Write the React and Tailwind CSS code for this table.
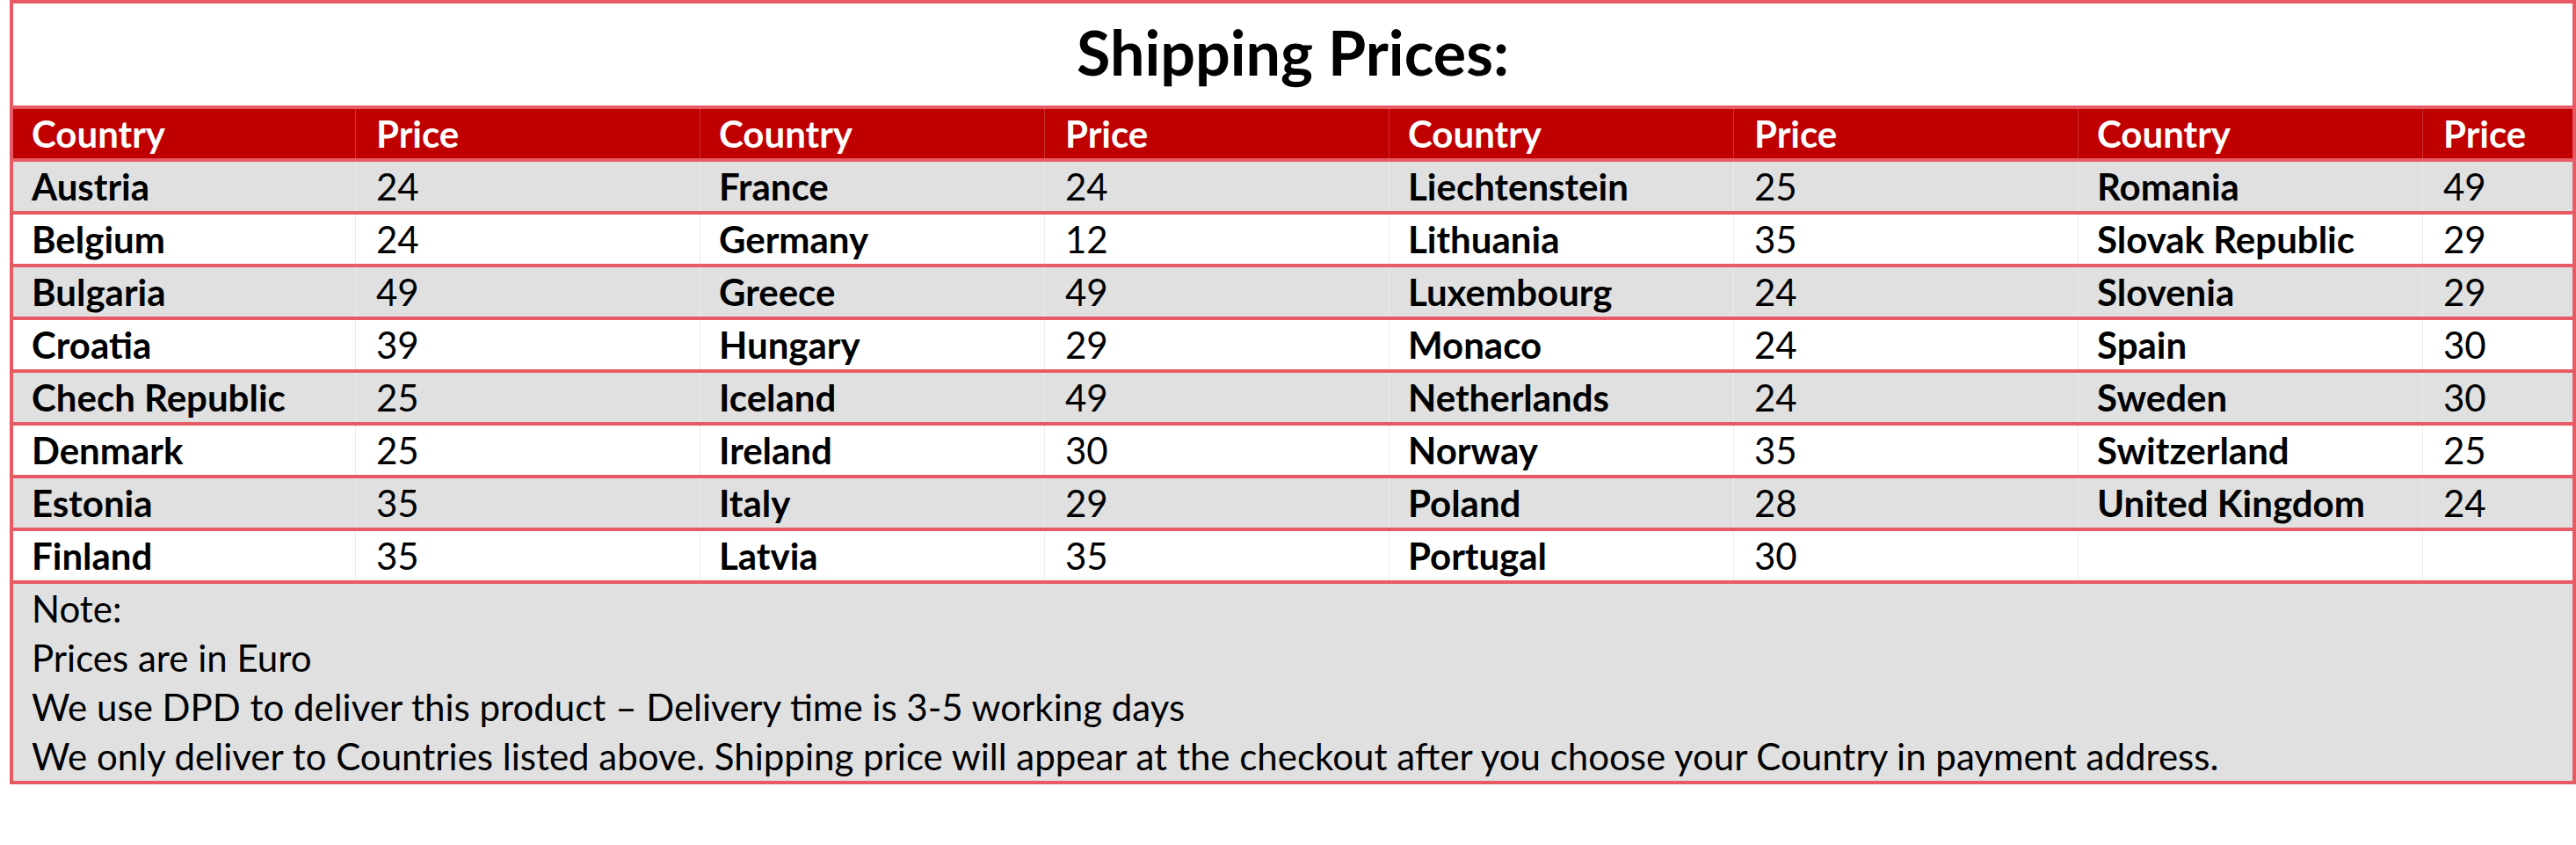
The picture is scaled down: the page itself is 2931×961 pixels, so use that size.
const GROUPS = [
  [["Austria", 24], ["Belgium", 24], ["Bulgaria", 49], ["Croatia", 39], ["Chech Republic", 25], ["Denmark", 25], ["Estonia", 35], ["Finland", 35]],
  [["France", 24], ["Germany", 12], ["Greece", 49], ["Hungary", 29], ["Iceland", 49], ["Ireland", 30], ["Italy", 29], ["Latvia", 35]],
  [["Liechtenstein", 25], ["Lithuania", 35], ["Luxembourg", 24], ["Monaco", 24], ["Netherlands", 24], ["Norway", 35], ["Poland", 28], ["Portugal", 30]],
  [["Romania", 49], ["Slovak Republic", 29], ["Slovenia", 29], ["Spain", 30], ["Sweden", 30], ["Switzerland", 25], ["United Kingdom", 24], null],
];

const COLS = "grid grid-cols-[390px_392px_392px_392px_392px_392px_392px_1fr]";

function HeaderRow() {
  return (
    <div className={`${COLS} h-[56px] bg-[#c00000] text-white font-bold`}>
      {GROUPS.map((_, g) => (
        <div key={g} className="contents">
          <div className="flex items-center pl-[21px] border-r border-white/20">Country</div>
          <div className={`flex items-center pl-[23px] ${g < 3 ? "border-r border-white/20" : ""}`}>Price</div>
        </div>
      ))}
    </div>
  );
}

function DataRow({ i }) {
  const bg = i % 2 === 0 ? "bg-[#e0e0e0]" : "bg-white";
  return (
    <div className={`${COLS} h-[56px] ${bg} border-t-4 border-[#e85b65] box-content`}>
      {GROUPS.map((grp, g) => {
        const row = grp[i];
        return (
          <div key={g} className="contents">
            <div className="flex items-center pl-[21px] font-bold border-r border-[#ebebeb]">{row ? row[0] : ""}</div>
            <div className={`flex items-center pl-[23px] ${g < 3 ? "border-r border-[#ebebeb]" : ""}`}>{row ? row[1] : ""}</div>
          </div>
        );
      })}
    </div>
  );
}

export default function App() {
  return (
    <div className="min-h-screen bg-white pl-[11px] pr-0 font-['Lato',sans-serif] text-black">
      <div className="w-[2920px] border-4 border-[#e85b65] text-[42px] leading-none">
        <div className="h-[116px] flex items-center justify-center text-[70px] font-bold pb-[6px]">
          Shipping Prices:
        </div>
        <div className="border-t-4 border-[#e85b65]">
          <HeaderRow />
        </div>
        {Array.from({ length: 8 }).map((_, i) => (
          <DataRow key={i} i={i} />
        ))}
        <div className="border-t-4 border-[#e85b65] bg-[#e0e0e0] pl-[21px] leading-[56px]">
          <p>Note:</p>
          <p>Prices are in Euro</p>
          <p>We use DPD to deliver this product – Delivery time is 3-5 working days</p>
          <p>We only deliver to Countries listed above. Shipping price will appear at the checkout after you choose your Country in payment address.</p>
        </div>
      </div>
    </div>
  );
}
